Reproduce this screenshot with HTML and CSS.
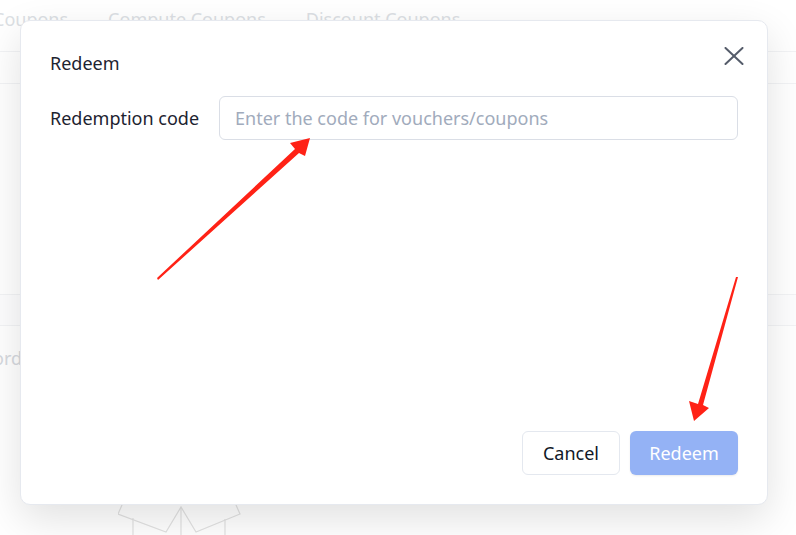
FILE: index.html
```html
<!DOCTYPE html>
<html lang="en">
<head>
<meta charset="utf-8">
<title>Redeem</title>
<link rel="stylesheet" href="styles.css">
</head>
<body>
<div class="page">
  <div class="tabs">
    <span class="tab tab-first">Coupons</span>
    <span class="tab">Compute Coupons</span>
    <span class="tab">Discount Coupons</span>
  </div>
  <div class="filter-row"></div>
  <div class="table-head"></div>
  <div class="table-row"><span class="cell-text">Record</span></div>
  <div class="empty">
    <svg class="empty-icon" width="130" height="40" viewBox="0 0 130 40">
      <g fill="none" stroke="#e2e2e2" stroke-width="1.2">
        <polyline points="4,0 0,9 48,27 63,2 78,27 122,9 118,0"/>
        <line x1="63" y1="2" x2="63" y2="40"/>
        <line x1="15" y1="13" x2="15" y2="40"/>
        <line x1="107" y1="14" x2="107" y2="40"/>
      </g>
    </svg>
  </div>
</div>

<div class="modal">
  <div class="modal-header">
    <span class="modal-title">Redeem</span>
  </div>
  <button class="close" type="button" aria-label="Close">
    <svg width="20" height="18" viewBox="0 0 20 18">
      <g stroke="#555c6a" stroke-width="2" stroke-linecap="round">
        <line x1="1.5" y1="1" x2="18.5" y2="17"/>
        <line x1="18.5" y1="1" x2="1.5" y2="17"/>
      </g>
    </svg>
  </button>
  <div class="form-row">
    <label class="form-label" for="code">Redemption code</label>
    <input id="code" class="form-input" type="text" placeholder="Enter the code for vouchers/coupons">
  </div>
  <div class="modal-footer">
    <button class="btn btn-default" type="button">Cancel</button>
    <button class="btn btn-primary" type="button">Redeem</button>
  </div>
</div>

<svg class="annotations" width="796" height="535" viewBox="0 0 796 535">
  <polygon fill="#ff2216" points="158,280 157,278 295,149 290,143 310,138 305,156 299,153"/>
  <polygon fill="#ff2216" points="738,277 736,277 698,404 689,401 694,421 709,408 703,405"/>
</svg>
</body>
</html>
```

FILE: styles.css
```css
* { box-sizing: border-box; }

html, body {
  margin: 0;
  padding: 0;
}

body {
  width: 796px;
  height: 535px;
  overflow: hidden;
  position: relative;
  background: #ffffff;
  font-family: "Noto Sans", "Open Sans", sans-serif;
  font-size: 18px;
  color: #1d2330;
}

/* background page (behind mask) */
.page {
  width: 796px;
  height: 535px;
  overflow: hidden;
  display: flex;
  flex-direction: column;
}

.tabs {
  flex: none;
  height: 52px;
  display: flex;
  gap: 40px;
  padding-top: 6px;
  border-bottom: 1px solid #f2f3f5;
  color: #dcdfe4;
  line-height: 26px;
}

.tab-first { margin-left: -7px; }

.filter-row {
  flex: none;
  height: 32px;
  border-bottom: 1px solid #f2f3f5;
}

.table-head {
  flex: none;
  margin-top: 210px;
  height: 32px;
  border-top: 1px solid #f2f3f5;
  border-bottom: 1px solid #f2f3f5;
  background: #fdfdfe;
}

.table-row {
  flex: none;
  height: 64px;
  display: flex;
  align-items: center;
}

.cell-text {
  margin-left: -37px;
  color: #d6d9de;
  line-height: 26px;
}

.empty {
  flex: none;
  padding-left: 118px;
  padding-top: 115px;
}

.empty-icon { display: block; }

/* modal */
.modal {
  position: absolute;
  left: 20px;
  top: 20px;
  width: 748px;
  height: 485px;
  background: #ffffff;
  border: 1px solid #e6e9ef;
  border-radius: 10px;
  box-shadow: 0 14px 40px rgba(0, 0, 0, 0.12);
  padding: 29px;
  display: flex;
  flex-direction: column;
}

.modal-header {
  height: 26px;
  display: flex;
  align-items: center;
}

.modal-title {
  line-height: 26px;
  color: #1d2330;
}

.close {
  position: absolute;
  top: 26px;
  right: 23px;
  width: 20px;
  height: 18px;
  padding: 0;
  border: 0;
  background: transparent;
  cursor: pointer;
}

.close svg { display: block; }

.form-row {
  margin-top: 20px;
  display: flex;
  align-items: center;
}

.form-label {
  flex: none;
  width: 169px;
  line-height: 26px;
  color: #1d2330;
}

.form-input {
  flex: 1;
  height: 44px;
  border: 1px solid #dadee6;
  border-radius: 6px;
  padding: 0 15px;
  font-family: inherit;
  font-size: 18px;
  color: #1d2330;
  outline: none;
  background: #ffffff;
}

.form-input::placeholder { color: #a1abbc; }

.modal-footer {
  margin-top: auto;
  display: flex;
  justify-content: flex-end;
  gap: 10px;
}

.btn {
  height: 44px;
  border-radius: 6px;
  font-family: inherit;
  font-size: 18px;
  padding: 0;
  cursor: pointer;
}

.btn-default {
  width: 98px;
  background: #ffffff;
  border: 1px solid #e4e8ef;
  color: #111827;
}

.btn-primary {
  width: 108px;
  background: #94b2f5;
  border: 0;
  color: #ffffff;
  box-shadow: 0 1px 2px rgba(0, 0, 0, 0.08);
}

.annotations {
  position: absolute;
  left: 0;
  top: 0;
  pointer-events: none;
}
```
